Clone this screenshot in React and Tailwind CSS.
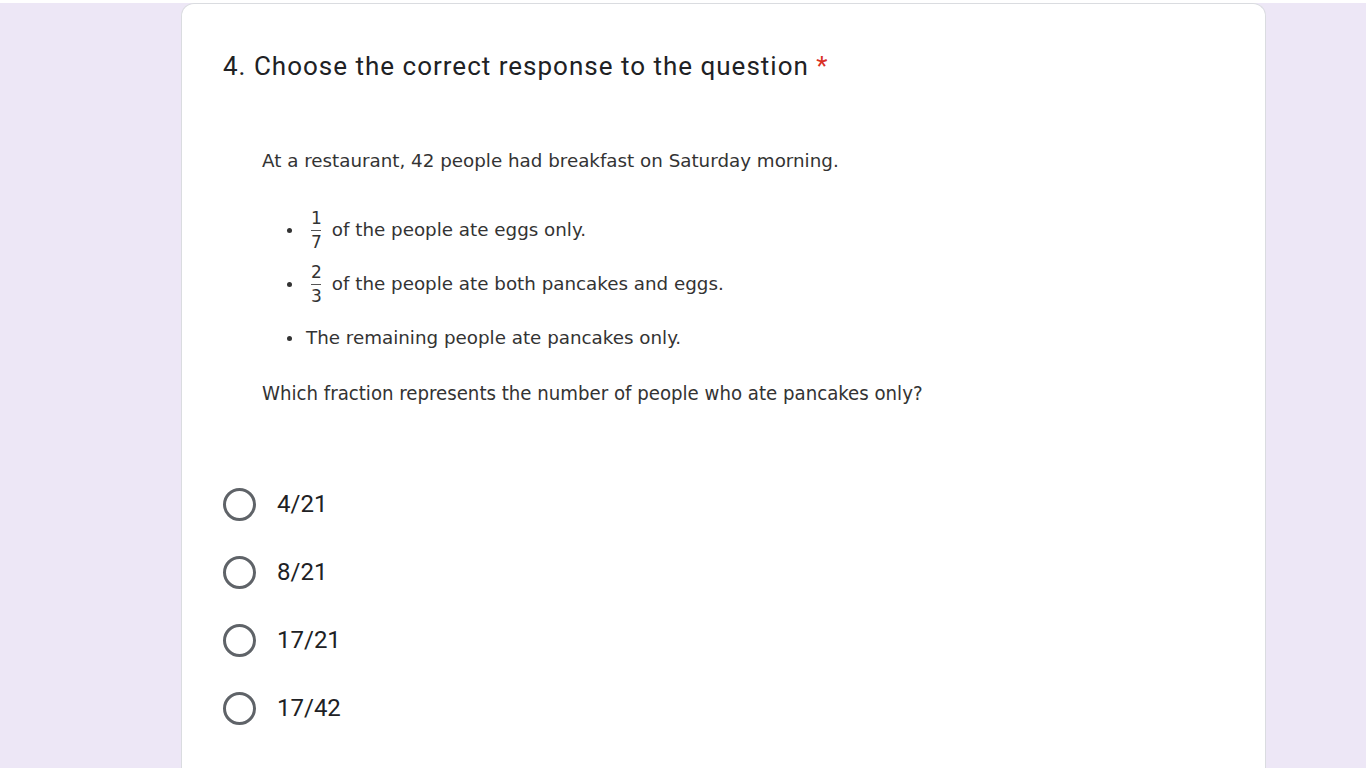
import React from "react";

const options = ["4/21", "8/21", "17/21", "17/42"];

function Frac({ n, d }) {
  return (
    <span className="inline-flex flex-col items-center leading-none text-[17px] mr-[10px]">
      <span className="block">{n}</span>
      <span className="block w-[10px] h-px bg-[#555] my-[3px]"></span>
      <span className="block">{d}</span>
    </span>
  );
}

export default function App() {
  return (
    <div className="min-h-screen bg-[#ede7f6]">
      <div className="ml-[181px] mt-[3px] w-[1085px] bg-white rounded-t-[13px] border border-[#dadce0] border-b-0 pl-[41px] pt-[44px] h-[765px] overflow-hidden">
        <h2 className="text-[26px] text-[#202124] font-['Roboto',sans-serif] leading-[36px] tracking-[1px]">
          4. Choose the correct response to the question{" "}
          <span className="text-[#d93025]">*</span>
        </h2>

        {/* question image */}
        <div className="mt-[64px] ml-[39px] text-[#333] font-['DejaVu_Sans',sans-serif] text-[18.3px]">
          <p className="leading-[26px]">At a restaurant, 42 people had breakfast on Saturday morning.</p>
          <ul className="mt-[32px] ml-[25px] space-y-[6px]">
            <li className="flex items-center gap-[19px] h-[48px]">
              <span className="w-[5px] h-[5px] rounded-full bg-[#333]"></span>
              <span className="flex items-center">
                <Frac n="1" d="7" />
                of the people ate eggs only.
              </span>
            </li>
            <li className="flex items-center gap-[19px] h-[48px]">
              <span className="w-[5px] h-[5px] rounded-full bg-[#333]"></span>
              <span className="flex items-center">
                <Frac n="2" d="3" />
                of the people ate both pancakes and eggs.
              </span>
            </li>
            <li className="flex items-center gap-[14px] h-[48px]">
              <span className="w-[5px] h-[5px] rounded-full bg-[#333]"></span>
              <span>The remaining people ate pancakes only.</span>
            </li>
          </ul>
          <p className="mt-[18px] leading-[26px] font-['DejaVu_Sans_Condensed','DejaVu_Sans',sans-serif] text-[20.2px]">
            Which fraction represents the number of people who ate pancakes only?
          </p>
        </div>

        {/* options */}
        <div className="mt-[81px] flex flex-col gap-[34px]">
          {options.map((o) => (
            <label key={o} className="flex items-center gap-[21px] h-[34px] cursor-pointer">
              <span className="w-[33px] h-[33px] rounded-full border-[3px] border-[#5f6368] box-border"></span>
              <span className="text-[24px] text-[#202124] font-['Roboto',sans-serif]">{o}</span>
            </label>
          ))}
        </div>
      </div>
    </div>
  );
}
